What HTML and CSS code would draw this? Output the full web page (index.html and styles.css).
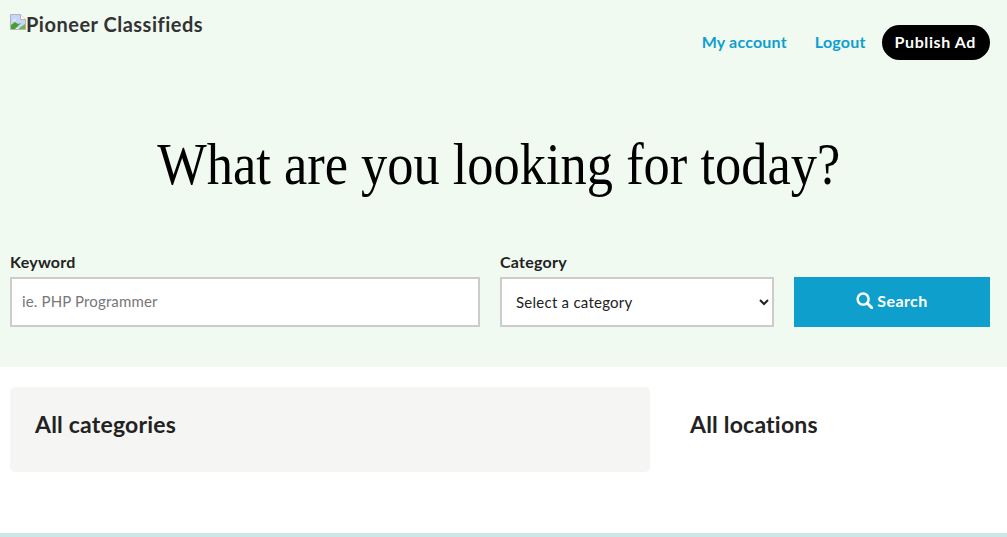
FILE: index.html
```html
<!DOCTYPE html>
<html lang="en">
<head>
<meta charset="utf-8">
<title>Pioneer Classifieds</title>
<link rel="stylesheet" href="styles.css">
</head>
<body>
<section class="hero">
  <header class="topbar">
    <a class="logo" href="#">
      <svg class="broken" width="16" height="16" viewBox="0 0 16 16" aria-hidden="true">
        <path d="M.5.5h10l5 5v10H.5z" fill="#fff" stroke="#b4b4b4"/>
        <path d="M1 1h9.500v4.500H15V13L1 15z" fill="#c5d6fb"/>
        <path d="M3 6.500c0-1.500 3-1.500 3 0z" fill="#fff"/>
        <path d="M1 15v-4l4-3 3 2 3-1-6 6z" fill="#4ba02c"/>
        <path d="M8 15l7-5v5z" fill="#6cb84c"/>
        <path d="M10.500.5v5h5" fill="#fff" stroke="#b4b4b4"/>
      </svg><span class="logo-text">Pioneer Classifieds</span>
    </a>
    <nav class="nav">
      <a href="#">My account</a>
      <a href="#">Logout</a>
      <a class="publish" href="#">Publish Ad</a>
    </nav>
  </header>
  <h1 class="title"><span class="title-text">What are you looking for today?</span></h1>
  <form class="search">
    <div class="field">
      <label for="kw">Keyword</label>
      <input id="kw" type="text" placeholder="ie. PHP Programmer">
    </div>
    <div class="field">
      <label for="cat">Category</label>
      <select id="cat"><option>Select a category</option></select>
    </div>
    <button type="button" class="go">
      <svg width="17" height="17" viewBox="0 0 16 16" aria-hidden="true"><circle cx="6.7" cy="6.700" r="5.200" fill="none" stroke="#fff" stroke-width="2.300"/><path d="M10.600 10.600l4.200 4.200" stroke="#fff" stroke-width="2.800" stroke-linecap="round"/></svg>
      Search
    </button>
  </form>
</section>
<main class="lists">
  <section class="card"><h2>All categories</h2></section>
  <section class="plain"><h2>All locations</h2></section>
</main>
<footer class="band"></footer>
</body>
</html>
```
FILE: styles.css
```css
* { box-sizing: border-box; }
html, body { margin: 0; height: 100%; }
body {
  font-family: Lato, "Noto Sans", sans-serif;
  background: #fff;
  color: #222;
  overflow: hidden;
}
a { text-decoration: none; }
.hero {
  height: 367px;
  background: #f0faf0;
  padding: 0 17px 0 10px;
}
.topbar {
  display: flex;
  justify-content: space-between;
  align-items: flex-start;
  height: 60px;
}
.logo {
  display: flex;
  align-items: flex-start;
  margin-top: 13px;
  color: #333;
  font-size: 20px;
  font-weight: 700;
  letter-spacing: 0.5px;
  line-height: 22px;
}
.broken { flex: none; margin-top: 1px; }
.nav {
  display: flex;
  align-items: center;
  margin-top: 25px;
  font-size: 16px;
  font-weight: 700;
  letter-spacing: 0.2px;
}
.nav a { color: #0e9fcd; margin: 0 28px 2px 0; }
.nav a:nth-child(2) { margin-right: 16px; }
.nav .publish {
  margin: 0;
  height: 35px;
  line-height: 34px;
  padding: 0 14px 0 13px;
  border-radius: 18px;
  background: #000;
  color: #fff;
  letter-spacing: 0.6px;
}
.title {
  margin: 0;
  padding-top: 72px;
  padding-right: 3px;
  height: 190px;
  text-align: center;
  font-family: "Liberation Serif", serif;
  font-weight: 400;
  font-size: 60px;
  line-height: 64px;
  color: #000;
  white-space: nowrap;
}
.title-text {
  display: inline-block;
  transform: scaleX(0.874);
}
.search {
  display: grid;
  grid-template-columns: 470px 274px 196px;
  column-gap: 20px;
  margin-top: 2px;
  align-items: end;
}
.field { display: flex; flex-direction: column; }
.field label {
  font-size: 16px;
  font-weight: 700;
  letter-spacing: 0.25px;
  line-height: 20px;
  margin-bottom: 5px;
  color: #222;
}
.field input, .field select {
  height: 50px;
  width: 100%;
  border: 2px solid #ccc;
  border-radius: 0;
  background: #fff;
  font-family: Lato, sans-serif;
  font-size: 15px;
  color: #222;
}
.field input { padding: 0 10px 2px; letter-spacing: 0.15px; }
.field input::placeholder { color: #777; opacity: 1; }
.field select { padding: 0 0 0 10px; letter-spacing: 0.25px; }
.go {
  height: 50px;
  border: 0;
  background: #0e9fcd;
  color: #fff;
  font-family: inherit;
  font-size: 16px;
  font-weight: 700;
  letter-spacing: 0.4px;
  display: flex;
  align-items: center;
  justify-content: center;
  gap: 4px;
  padding: 0 0 4px;
}
.lists {
  display: grid;
  grid-template-columns: 640px 1fr;
  padding: 20px 10px 0;
  column-gap: 15px;
}
.lists h2 {
  margin: 0;
  font-size: 23px;
  font-weight: 700;
  letter-spacing: 0.2px;
  line-height: 30px;
  color: #222;
}
.card {
  height: 85px;
  padding: 22px 25px 0;
  background: #f5f5f3;
  border-radius: 5px;
}
.plain { padding: 22px 25px 0; }
.band {
  position: fixed;
  left: 0;
  right: 0;
  bottom: 0;
  height: 4px;
  background: #c9e8e6;
}
```
